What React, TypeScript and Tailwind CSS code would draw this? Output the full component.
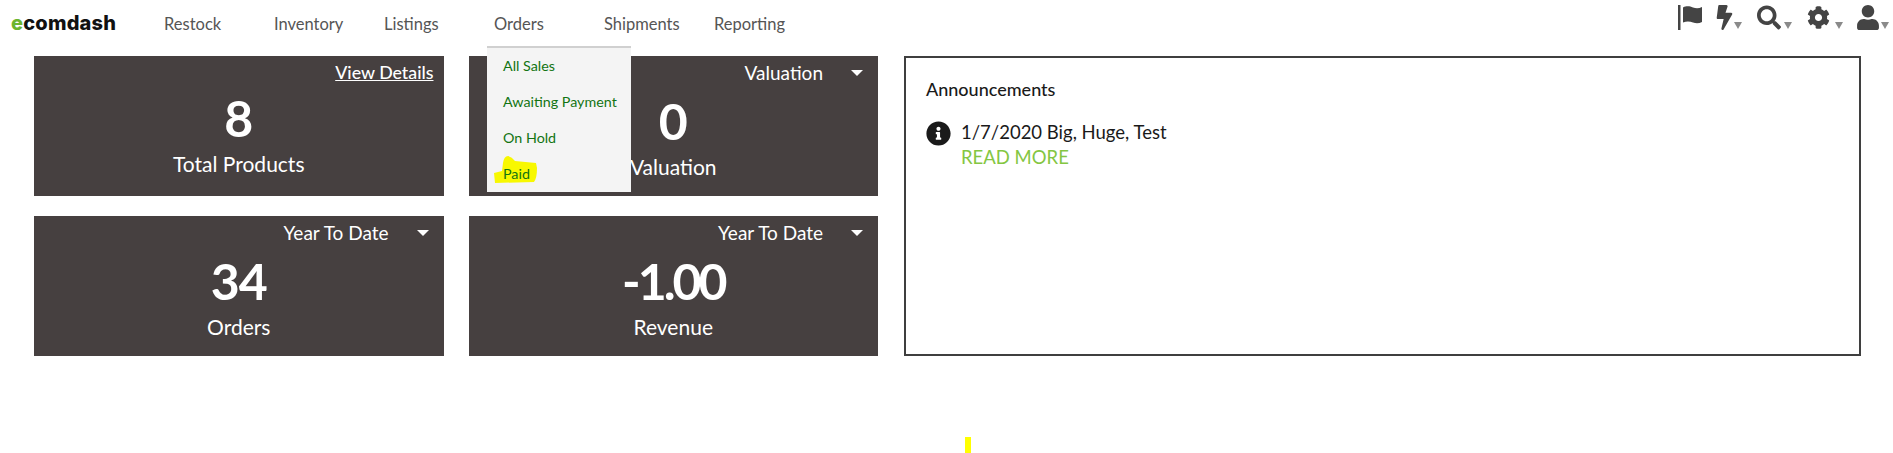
import { FaBolt, FaCog, FaInfoCircle, FaSearch, FaUser } from "react-icons/fa";

const navItems = ["Restock", "Inventory", "Listings", "Orders", "Shipments", "Reporting"];
const orderItems = ["All Sales", "Awaiting Payment", "On Hold", "Paid"];

const Caret = () => (
  <span className="h-0 w-0 border-x-[6px] border-t-[6px] border-x-transparent border-t-white" />
);

const SmallCaret = ({ className }: { className: string }) => (
  <span
    className={`mr-[1px] mb-[1px] h-0 w-0 self-end border-x-[4px] border-t-[7px] border-x-transparent border-t-[#8a8a8a] ${className}`}
  />
);

const FlagIcon = () => (
  <svg viewBox="0 0 24 25" className="h-[25px] w-[24px]" fill="currentColor">
    <rect x="0" y="0" width="2.5" height="25" />
    <path d="M5 2.5C9 0.5 12 1.5 15 2.5C18 3.5 21 3.5 24 2V17C21 18.5 18 18.5 15 17.5C12 16.5 9 16 5 17.5Z" />
  </svg>
);

const Card = ({
  value,
  label,
  filter,
  details,
  numberClass,
}: {
  value: string;
  label: string;
  filter?: string;
  details?: boolean;
  numberClass?: string;
}) => (
  <div className="flex h-[140px] flex-col bg-[#464040] text-white">
    {details ? (
      <div className="flex h-[32px] items-center justify-end">
        <a className="mr-[10px] text-[17.8px] font-medium underline">View Details</a>
      </div>
    ) : (
      <div className="flex h-[35px] items-center justify-end">
        <span className="text-[19px]">{filter}</span>
        <span className="mr-[15px] mb-[2px] ml-[28px] flex w-[12px] justify-center">
          <Caret />
        </span>
      </div>
    )}
    <div className={`mt-[5px] text-center text-[50px] leading-[50px] font-bold ${numberClass ?? ""}`}>
      {value}
    </div>
    <div className="mt-[9px] text-center text-[21px] leading-[24px]">{label}</div>
  </div>
);

export default function App() {
  return (
    <div className="relative h-[453px] w-[1893px] overflow-hidden bg-white font-['Lato','Open_Sans',sans-serif]">
      <header className="flex h-[46px] items-center pr-[3px] pl-[11px]">
        <div className="w-[153px] font-['Inter',sans-serif] text-[20px] leading-none font-extrabold tracking-[0.2px] text-[#111]">
          <span className="text-[#6cb52d]">e</span>comdash
        </div>
        <nav className="mt-[2px] flex">
          {navItems.map((item) => (
            <div key={item} className="relative w-[110px] text-[16.5px] leading-[24px] text-[#555]">
              {item}
              {item === "Orders" && (
                <div className="absolute top-[34px] left-[-7px] z-10 w-[144px] border-t-2 border-[#d0d0d0] bg-[#f4f4f4] pl-[16px] text-[14.3px] text-[#127412]">
                  {orderItems.map((sub) => (
                    <div key={sub} className="relative flex h-[36px] items-center">
                      {sub === "Paid" && (
                        <svg viewBox="0 0 43 27" className="absolute top-0 left-[-9px] h-[27px] w-[43px]" fill="#f8f800">
                          <path d="M9 7Q10 0 14 0Q18 1 21 5L42 7L43 12Q43 22 40 26L1 27L0 17L8 15Z" />
                        </svg>
                      )}
                      <span className="relative">{sub}</span>
                    </div>
                  ))}
                </div>
              )}
            </div>
          ))}
        </nav>
        <div className="mb-[11px] ml-auto flex items-start gap-[14px] text-[#444]">
          <FlagIcon />
          <div className="flex">
            <FaBolt className="h-[25px] w-[17px]" />
            <SmallCaret className="ml-[1px]" />
          </div>
          <div className="flex">
            <FaSearch className="h-[25px] w-[24px]" />
            <SmallCaret className="ml-[3px]" />
          </div>
          <div className="flex">
            <FaCog className="h-[25px] w-[23px]" />
            <SmallCaret className="ml-[5px]" />
          </div>
          <div className="-ml-[1px] flex">
            <FaUser className="h-[25px] w-[22px]" />
            <SmallCaret className="ml-[2px]" />
          </div>
        </div>
      </header>

      <main className="mt-[10px] ml-[34px] flex w-[1827px] gap-[26px]">
        <div className="grid w-[844px] grid-cols-2 gap-x-[25px] gap-y-[20px]">
          <Card value="8" label="Total Products" details />
          <Card value="0" label="Valuation" filter="Valuation" />
          <Card value="34" label="Orders" filter="Year To Date" numberClass="tracking-[-1px]" />
          <Card value="-1.00" label="Revenue" filter="Year To Date" numberClass="tracking-[-3px]" />
        </div>
        <section className="h-[300px] flex-1 border-2 border-[#3f3f3f] px-[20px] pt-[19px] text-[#1a1a1a]">
          <h2 className="text-[18px] leading-[24px] font-medium">Announcements</h2>
          <div className="mt-[19px] flex gap-[10px]">
            <FaInfoCircle className="mt-[1px] h-[25px] w-[25px]" />
            <div className="text-[18.5px] leading-[24px]">
              <div>1/7/2020 Big, Huge, Test</div>
              <a className="mt-[1px] block text-[#84c642]">READ MORE</a>
            </div>
          </div>
        </section>
      </main>

      <span className="absolute top-[437px] left-[965px] h-[16px] w-[6px] bg-[#ffff00]" />
    </div>
  );
}
